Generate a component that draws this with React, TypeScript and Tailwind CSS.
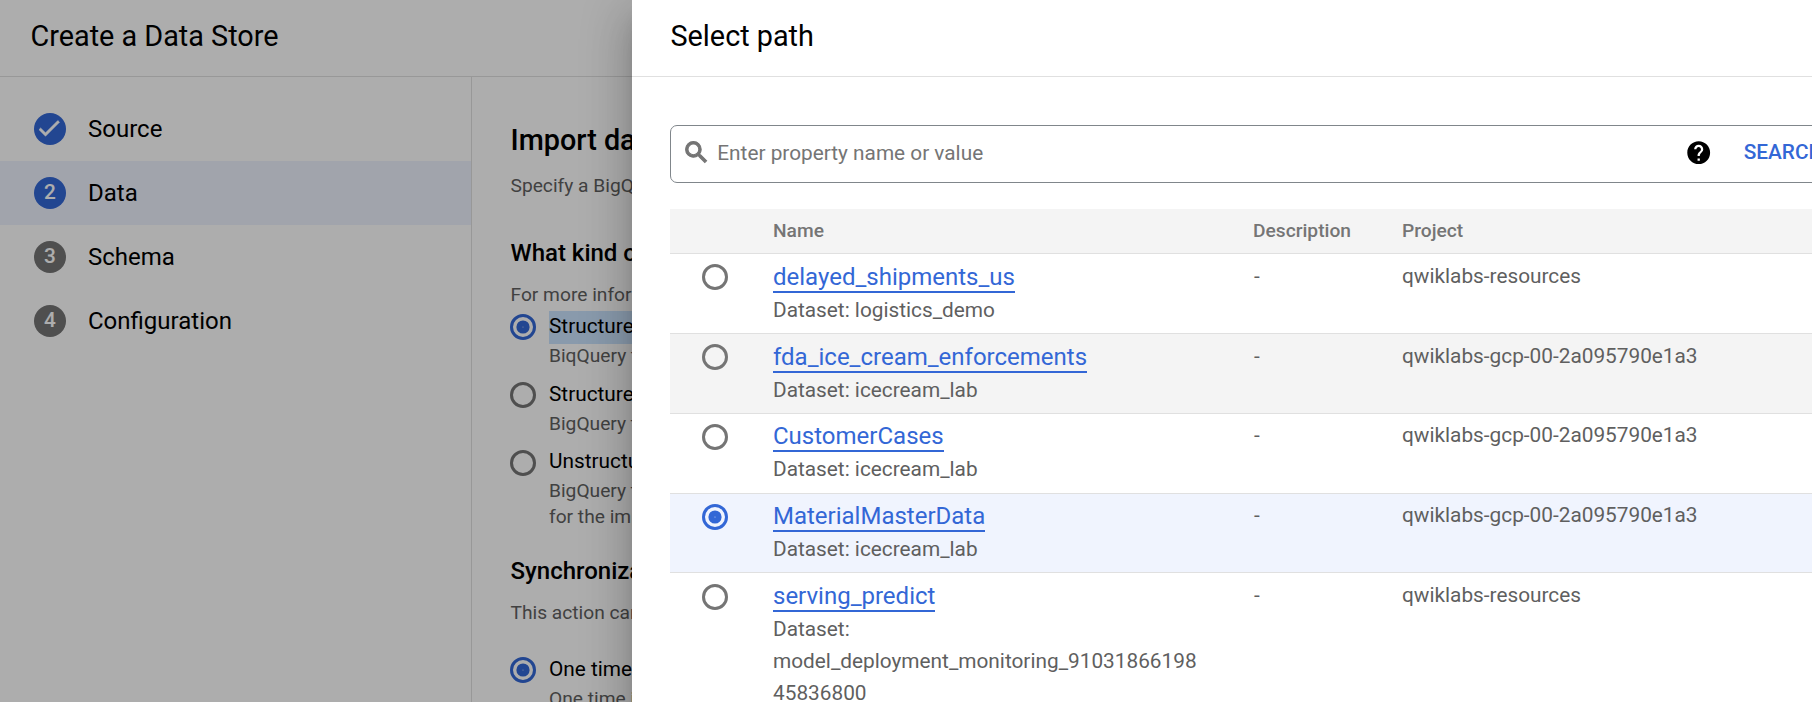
import React from "react";

function Radio({ checked = false, className = "" }: { checked?: boolean; className?: string }) {
  return (
    <svg
      width="26"
      height="26"
      viewBox="0 0 26 26"
      className={`block shrink-0 ${checked ? "text-[#3367d6]" : "text-[#757575]"} ${className}`}
    >
      <circle cx="13" cy="13" r="11.5" fill="none" stroke="currentColor" strokeWidth="3" />
      {checked && <circle cx="13" cy="13" r="6.6" fill="currentColor" />}
      {checked && <circle cx="13" cy="13" r="0.6" fill="#fff" fillOpacity="0.7" />}
    </svg>
  );
}

const steps = [
  { n: 1, label: "Source", state: "done" },
  { n: 2, label: "Data", state: "current" },
  { n: 3, label: "Schema", state: "todo" },
  { n: 4, label: "Configuration", state: "todo" },
];

function Step({ n, label, state }: { n: number; label: string; state: string }) {
  return (
    <li className={`flex h-16 items-center pl-[34px] ${state === "current" ? "bg-[#eef2fe]" : ""}`}>
      <span
        className={`mr-[22px] flex size-8 justify-center rounded-full text-[20.8px] leading-[30px] font-medium text-white ${
          state === "todo" ? "bg-[#757575]" : "bg-[#3367d6]"
        }`}
      >
        {state === "done" ? (
          <svg width="28" height="28" viewBox="0 0 24 24" fill="currentColor" className="mt-px mr-[3px] shrink-0">
            <path d="M9 16.17L4.83 12l-1.42 1.41L9 19 21 7l-1.41-1.41z" stroke="currentColor" strokeWidth="0.5" />
          </svg>
        ) : (
          n
        )}
      </span>
      <span className="text-2xl">{label}</span>
    </li>
  );
}

function Option({
  checked,
  label,
  selected,
  className = "",
  radioClass = "mt-[3px]",
  children,
}: {
  checked?: boolean;
  label: string;
  selected?: boolean;
  className?: string;
  radioClass?: string;
  children: React.ReactNode;
}) {
  return (
    <div className={`-ml-[0.5px] flex gap-[13px] ${className}`}>
      <Radio checked={checked} className={radioClass} />
      <div>
        <div className={`text-[20.8px] leading-[30px] ${selected ? "h-[33px] bg-[#cbe3fe]" : "h-8"}`}>{label}</div>
        <div className={`text-[19.2px] text-[#616161] ${selected ? "leading-[23px]" : "leading-[25px]"}`}>
          {children}
        </div>
      </div>
    </div>
  );
}

const rows = [
  { name: "delayed_shipments_us", dataset: "logistics_demo", project: "qwiklabs-resources", look: "h-20", pad: "pt-1.5", radio: "mt-1" },
  { name: "fda_ice_cream_enforcements", dataset: "icecream_lab", project: "qwiklabs-gcp-00-2a095790e1a3", look: "h-20 bg-[#f4f4f4]", pad: "pt-1.5", radio: "mt-1" },
  { name: "CustomerCases", dataset: "icecream_lab", project: "qwiklabs-gcp-00-2a095790e1a3", look: "h-20", pad: "pt-[5px]", radio: "mt-[5px]" },
  { name: "MaterialMasterData", dataset: "icecream_lab", project: "qwiklabs-gcp-00-2a095790e1a3", look: "h-[79px] bg-[#f0f4fe]", pad: "pt-[5px]", radio: "mt-[5px]", checked: true },
  { name: "serving_predict", dataset: "model_deployment_monitoring_9103186619845836800", project: "qwiklabs-resources", look: "h-[144px]", pad: "pt-1.5", radio: "mt-[5px]" },
];

export default function App() {
  return (
    <div className="relative h-[702px] w-full overflow-hidden bg-white font-[Roboto,sans-serif] text-black">
      <div className="flex h-full flex-col">
        <header className="h-[77px] shrink-0 border-b border-[#e0e0e0] pt-4 pl-[30.5px] text-[28.8px] leading-10">
          Create a Data Store
        </header>
        <div className="flex min-h-0 flex-1">
          <nav className="w-[472px] shrink-0 border-r border-[#e0e0e0] pt-5">
            <ul>
              {steps.map((s) => (
                <Step key={s.n} {...s} />
              ))}
            </ul>
          </nav>
          <main className="w-[720px] shrink-0 overflow-hidden pt-[43px] pl-[38.5px]">
            <h1 className="text-[28.8px] leading-10 font-medium">Import data</h1>
            <p className="mt-[13px] text-[19.2px] leading-[25px] text-[#616161]">Specify a BigQuery</p>
            <h2 className="mt-[39px] text-2xl leading-8 font-medium">What kind of</h2>
            <p className="mt-[13px] text-[19.2px] leading-[25px] text-[#616161]">For more information</p>
            <Option checked selected label="Structured" className="mt-1">
              BiqQuery table
            </Option>
            <Option label="Structured" className="mt-3">
              BigQuery table
            </Option>
            <Option label="Unstructured" className="mt-2.5" radioClass="mt-[3.5px]">
              <div className="h-[26px]">BigQuery table</div>
              <div>for the import</div>
            </Option>
            <h2 className="mt-[26px] text-2xl leading-8 font-medium">Synchronization</h2>
            <p className="mt-[13px] text-[19.2px] leading-[25px] text-[#616161]">This action cannot</p>
            <Option checked label="One time" className="mt-[29px]">
              One time import
            </Option>
          </main>
        </div>
      </div>

      <div className="absolute inset-0 bg-black/32" />

      <section className="absolute top-0 left-[632px] h-[760px] w-[1280px] bg-white shadow-[0_13px_16px_-8px_rgba(0,0,0,0.2),0_26px_38px_3px_rgba(0,0,0,0.14),0_10px_48px_8px_rgba(0,0,0,0.12)]">
        <header className="h-[77px] border-b border-[#e0e0e0] pt-4 pl-[38.5px] text-[28.8px] leading-10">
          Select path
        </header>
        <div className="pt-12 pl-[38px]">
          <div className="flex h-[58px] items-center rounded-l-[7px] border border-[#80868b] pl-[10.5px]">
            <svg width="28.8" height="28.8" viewBox="0 0 24 24" className="mb-1 shrink-0 fill-[#757575]">
              <path
                d="M15.5 14h-.79l-.28-.27C15.41 12.59 16 11.11 16 9.5 16 5.91 13.09 3 9.5 3S3 5.91 3 9.5 5.91 16 9.5 16c1.61 0 3.09-.59 4.23-1.57l.27.28v.79l5 4.99L20.49 19l-4.99-5zm-6 0C7.01 14 5 11.99 5 9.5S7.01 5 9.5 5 14 7.01 14 9.5 11.99 14 9.5 14z"
                stroke="#757575"
                strokeWidth="0.9"
              />
            </svg>
            <span className="mb-0.5 ml-[7px] w-[968px] shrink-0 text-[20.8px] leading-8 text-[#757575]">
              Enter property name or value
            </span>
            <svg width="27.4" height="27.4" viewBox="0 0 24 24" className="mb-[3px] shrink-0">
              <path d="M12 2C6.48 2 2 6.48 2 12s4.48 10 10 10 10-4.48 10-10S17.52 2 12 2zm1 17h-2v-2h2v2zm2.07-7.75l-.9.92C13.45 12.9 13 13.5 13 15h-2v-.5c0-1.1.45-2.1 1.17-2.83l1.24-1.26c.37-.36.59-.86.59-1.41 0-1.1-.9-2-2-2s-2 .9-2 2H8c0-2.21 1.79-4 4-4s4 1.79 4 4c0 .88-.36 1.68-.93 2.25z" />
            </svg>
            <span className="mb-1 ml-[31px] text-[20.8px] leading-8 font-medium text-[#3367d6]">SEARCH</span>
          </div>

          <div className="mt-[26px]">
            <div className="grid h-[45px] grid-cols-[103px_480px_149px_1fr] border-b border-[#e0e0e0] bg-[#f4f4f4] pt-[9px] text-[19.2px] leading-[25px] font-medium text-[#757575]">
              <span />
              <span>Name</span>
              <span>Description</span>
              <span>Project</span>
            </div>
            {rows.map((r) => (
              <div
                key={r.name}
                className={`grid grid-cols-[103px_480px_149px_1fr] border-b border-[#e0e0e0] text-[20.8px] leading-8 text-[#5f5f5f] ${r.pad} ${r.look}`}
              >
                <Radio checked={r.checked} className={`ml-8 ${r.radio}`} />
                <div className="w-[430px] pt-px">
                  <a className="block h-8 w-fit border-b-2 border-[#3367d6] text-2xl leading-8 text-[#3367d6]">
                    {r.name}
                  </a>
                  <div className="mt-px wrap-break-word">Dataset: {r.dataset}</div>
                </div>
                <span className="pl-px">-</span>
                <span>{r.project}</span>
              </div>
            ))}
          </div>
        </div>
      </section>
    </div>
  );
}
